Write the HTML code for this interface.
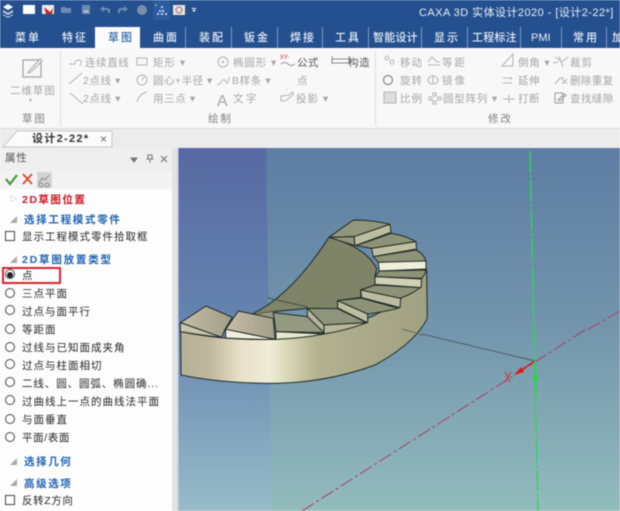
<!DOCTYPE html>
<html lang="zh"><head><meta charset="utf-8"><title>CAXA 3D</title>
<style>
html,body{margin:0;padding:0;background:#fff}
#r{position:relative;width:620px;height:511px;overflow:hidden;font-family:"Liberation Sans","Noto Sans CJK SC",sans-serif;filter:blur(.45px)}
#r div,#r span{position:absolute;white-space:nowrap}
.tab{top:31px;height:17px;line-height:15px;font-size:11px;letter-spacing:2px;color:#e6edf6;font-weight:500}
.sep{top:27px;width:1px;height:21px;background:#7d98c0}
.g{font-size:10.5px;letter-spacing:1.6px;color:#a6a6a6;line-height:14px;height:14px;margin-top:1px}
.gl{font-size:10.5px;letter-spacing:2px;color:#808080;line-height:14px;height:14px;margin-top:1px}
.p{left:22px;font-size:10.5px;letter-spacing:1px;color:#262626;line-height:14px;height:14px}
.h{font-size:10.5px;letter-spacing:1.7px;font-weight:700;color:#1f63b4;line-height:14px;height:14px}
.ra{left:5px;width:8px;height:8px;border:1px solid #444;border-radius:50%;background:#fff}
.cb{left:5px;width:8px;height:8px;border:1px solid #444;background:#fff}
.tri{font-size:7px;color:#aaa;left:10px;line-height:10px}
</style></head><body><div id="r">

<div style="left:0;top:0;width:620px;height:48px;background:#24508f"></div>
<svg style="position:absolute;left:0;top:0" width="200" height="26" viewBox="0 0 200 26">
 <path d="M3 7l5-3 5 3-5 3z" fill="#fff"/><path d="M3 10l5 3 5-3v2l-5 3-5-3z" fill="#cfd8f0"/><path d="M3 14l5 3 5-3v1l-5 3-5-3z" fill="#d7def2"/>
 <rect x="23" y="5" width="12" height="9" fill="#fff"/>
 <rect x="42" y="5" width="12" height="9" fill="#f2ede8"/><path d="M44 7l6 5 3-4-1 6h-6z" fill="#c8242b"/>
 <path d="M61 7h4l1 1h5v5H61z" fill="#6e8db5"/>
 <rect x="82" y="5" width="8" height="9" fill="#6f8ab0"/><rect x="83.500" y="10" width="5" height="3" fill="#a6b6cc"/>
 <path d="M100 9l4-3v2h3q3 0 3 3v2h-2v-2q0-1-2-1h-2v2z" fill="#6f8db6"/>
 <path d="M128 9l-4-3v2h-3q-3 0-3 3v2h2v-2q0-1 2-1h2v2z" fill="#6f8db6"/>
 <circle cx="142" cy="10" r="5" fill="#7c8ea9"/>
 <rect x="153" y="0" width="17" height="20" fill="#2b5c9f"/>
 <path d="M156 4l1 1-1 1-1-1z" fill="#e8d760"/>
 <g fill="#bcd3ee"><rect x="161" y="6" width="2" height="2"/><rect x="159" y="10" width="2" height="2"/><rect x="162" y="10" width="2" height="2"/><rect x="157" y="13" width="2" height="2"/><rect x="161" y="13" width="2" height="2"/><rect x="165" y="13" width="2" height="2"/></g>
 <rect x="173" y="5" width="12" height="10" fill="#e6e4de"/><circle cx="179" cy="10" r="3" fill="none" stroke="#a67" stroke-width="1"/>
 <path d="M192 8h4v1h-4zM192 10h4l-2 2z" fill="#fff"/>
</svg>
<div style="left:419px;top:6px;font-size:11px;letter-spacing:.45px;color:#e9eff7;line-height:15px">CAXA 3D 实体设计2020 - [设计2-22*]</div>

<div class="tab" style="left:15px">菜单</div>
<div class="tab" style="left:62px">特征</div>
<div style="left:95px;top:27px;width:45px;height:22px;background:#fbfbfb"></div>
<div class="tab" style="left:108px;color:#2d66ac">草图</div>
<div class="tab" style="left:153px">曲面</div>
<div class="tab" style="left:199px">装配</div>
<div class="tab" style="left:244px">钣金</div>
<div class="tab" style="left:290px">焊接</div>
<div class="tab" style="left:335px">工具</div>
<div class="tab" style="left:373px;letter-spacing:.2px">智能设计</div>
<div class="tab" style="left:434px">显示</div>
<div class="tab" style="left:472px;letter-spacing:.2px">工程标注</div>
<div class="tab" style="left:531px;letter-spacing:0;font-size:11px">PMI</div>
<div class="tab" style="left:573px">常用</div>
<div class="tab" style="left:612px">加</div>
<div class="sep" style="left:185px"></div><div class="sep" style="left:231px"></div><div class="sep" style="left:277px"></div><div class="sep" style="left:322px"></div><div class="sep" style="left:368px"></div><div class="sep" style="left:421px"></div><div class="sep" style="left:467px"></div><div class="sep" style="left:520px"></div><div class="sep" style="left:561px"></div><div class="sep" style="left:606px"></div>

<div style="left:0;top:49px;width:620px;height:79px;background:#f8f8f8;border-bottom:1px solid #d9d9d9"></div>
<div style="left:60px;top:51px;width:1px;height:75px;background:#dedede"></div>
<div style="left:375px;top:51px;width:1px;height:75px;background:#dedede"></div>

<svg style="position:absolute;left:0;top:49px" width="620" height="62" viewBox="0 49 620 62" fill="none" stroke="#b4b4b4" stroke-width="1">
 <rect x="23" y="60" width="18" height="17" stroke="#a5a5a5" stroke-width="1.300"/><path d="M29 71l11-12 2 2-11 11-3 1z" fill="#f8f8f8" stroke="#a5a5a5"/>
 <path d="M69 64h6M75 64q0-4 4-4t1 6"/>
 <path d="M69 84l13-11M70 93l13 11" />
 <rect x="137" y="58" width="10" height="7"/>
 <circle cx="142" cy="80" r="5"/><path d="M142 80l2-3"/>
 <path d="M137 102q2-8 10-10"/>
 <circle cx="223" cy="62" r="5"/><circle cx="223" cy="62" r=".7"/>
 <path d="M217 85q3-1 5-4t4 1 3-5"/>
 <path d="M281 64q4-3 7 0t7 0" stroke="#9a8fb0"/>
 <path d="M281 96l8-1 4-3v3l-8 6h-4z"/>
 <path d="M332 56v8M349 56v8M332 59h17M332 63h17" stroke="#888"/>
 <circle cx="387" cy="58" r="2"/><circle cx="392" cy="62" r="2"/>
 <circle cx="388" cy="80" r="4.500" stroke="#8a8a8a" stroke-width="1.300"/>
 <rect x="384" y="92" width="12" height="11" fill="#dedede"/>
 <path d="M428 62l4-5 5 5h3M428 65h12"/>
 <ellipse cx="433" cy="80" rx="5" ry="4"/><path d="M433 75v9"/>
 <path d="M433 93h3v3h-3zM429 97h3v3h-3zM438 97h3v3h-3zM433 101h3v3h-3z"/>
 <path d="M502 66l11-12v12z"/>
 <path d="M503 78h9M503 83h9M511 77v3M503 99h12M509 95v8"/>
 <path d="M555 57l7 5 6-5M559 56l4 11M553 63l5-1"/>
 <path d="M555 84l5-6h4M562 79l5 5M567 79l-5 5"/>
 <rect x="555" y="93" width="8" height="10" stroke="#999"/><path d="M558 100l6-6 2 1-6 6z" stroke="#999"/>
</svg>
<div style="left:217px;top:93px;font-size:16px;color:#a8a8a8;line-height:18px">A</div>
<div style="left:280px;top:55px;font-size:6px;color:#c0392b;line-height:7px">XY·</div>
<div style="left:285px;top:85px;font-size:10px;color:#aaa;line-height:10px">·</div>

<div class="g" style="left:10px;top:83px;letter-spacing:.9px">二维草图</div>
<div class="g" style="left:29px;top:95px;font-size:6px;line-height:10px">▾</div>
<div class="gl" style="left:22px;top:111px;letter-spacing:-.5px;font-size:10.5px;word-spacing:0">草 图</div>

<div class="g" style="left:85px;top:55px;letter-spacing:.6px">连续直线</div>
<div class="g" style="left:83px;top:73px;letter-spacing:.6px">2点线 ▾</div>
<div class="g" style="left:83px;top:91px;letter-spacing:.6px">2点线 ▾</div>
<div class="g" style="left:153px;top:55px;letter-spacing:1px">矩形 ▾</div>
<div class="g" style="left:153px;top:73px;letter-spacing:.5px">圆心+半径 ▾</div>
<div class="g" style="left:153px;top:91px;letter-spacing:.6px">用三点 ▾</div>
<div class="g" style="left:233px;top:55px;letter-spacing:.9px">椭圆形 ▾</div>
<div class="g" style="left:232px;top:73px;letter-spacing:.6px">B样条 ▾</div>
<div class="g" style="left:233px;top:91px;letter-spacing:2.500px">文字</div>
<div class="gl" style="left:208px;top:111px;letter-spacing:-.5px">绘 制</div>
<div class="g" style="left:297px;top:55px;letter-spacing:.4px;color:#555">公式</div>
<div class="g" style="left:297px;top:73px">点</div>
<div class="g" style="left:296px;top:91px;letter-spacing:1px">投影 ▾</div>
<div class="g" style="left:348px;top:55px;letter-spacing:.6px;color:#555">构造</div>
<div class="g" style="left:400px;top:55px;letter-spacing:1px">移动</div>
<div class="g" style="left:400px;top:73px;letter-spacing:1px">旋转</div>
<div class="g" style="left:400px;top:91px;letter-spacing:1px">比例</div>
<div class="g" style="left:442px;top:55px;letter-spacing:2px">等距</div>
<div class="g" style="left:442px;top:73px;letter-spacing:2px">镜像</div>
<div class="g" style="left:443px;top:91px;letter-spacing:.8px">圆型阵列 ▾</div>
<div class="g" style="left:518px;top:55px;letter-spacing:.8px">倒角 ▾</div>
<div class="g" style="left:518px;top:73px;letter-spacing:.5px">延伸</div>
<div class="g" style="left:518px;top:91px;letter-spacing:.5px">打断</div>
<div class="g" style="left:570px;top:55px;letter-spacing:1px">裁剪</div>
<div class="g" style="left:570px;top:73px;letter-spacing:.4px">删除重复</div>
<div class="g" style="left:570px;top:91px;letter-spacing:.4px">查找缝隙</div>
<div class="gl" style="left:488px;top:111px;letter-spacing:-.5px">修 改</div>

<div style="left:0;top:129px;width:620px;height:19px;background:#ececec"></div>
<svg style="position:absolute;left:0;top:129px" width="120" height="20"><path d="M3 18L17 2H112V18Z" fill="#fbfbfb" stroke="#c8c8c8"/></svg>
<div style="left:32px;top:132px;font-size:11px;font-weight:700;letter-spacing:1.300px;color:#333;line-height:14px">设计2-22*</div>
<div style="left:100px;top:132px;font-size:12px;color:#666;line-height:14px">×</div>

<div style="left:0;top:148px;width:177px;height:363px;background:#fdfdfd"></div>
<div style="left:0;top:148px;width:172px;height:24px;background:#efefef"></div>
<div style="left:0;top:172px;width:172px;height:17px;background:#f3f3f3"></div>
<div style="left:172px;top:148px;width:5px;height:363px;background:#e3e3e3"></div>
<div style="left:5px;top:151px;font-size:10.500px;letter-spacing:.8px;color:#555;line-height:14px">属性</div>
<svg style="position:absolute;left:125px;top:152px" width="46" height="14" fill="#777" stroke="#777"><path d="M6 6h6l-3 4z"/><path d="M23 3h4v4h-4zM25 7v4M21.500 7h7" fill="none"/><path d="M36 4l6 6M42 4l-6 6" fill="none" stroke-width="1.200"/></svg>
<svg style="position:absolute;left:3px;top:171px" width="52" height="18">
 <path d="M3 8l4 5 7-9" fill="none" stroke="#3f9a3a" stroke-width="2.200"/>
 <path d="M20 3l9 10M29 3l-9 10" fill="none" stroke="#d8503c" stroke-width="2"/>
 <rect x="34" y="1" width="15" height="16" fill="#d4d4d4"/>
 <path d="M36 12l3-5 3 2 4-5M38 12a2 2 0 1 0 .1 0M44 12a2 2 0 1 0 .1 0" fill="none" stroke="#8b8b8b"/>
</svg>

<div class="tri" style="top:195px">▷</div>
<div class="h" style="left:22px;top:193px;color:#cc1320;letter-spacing:1.500px">2D草图位置</div>
<div class="tri" style="top:216px">◢</div>
<div class="h" style="left:24px;top:213px;letter-spacing:1.700px">选择工程模式零件</div>
<div class="cb" style="top:231px"></div>
<div class="p" style="top:230px">显示工程模式零件拾取框</div>
<div class="tri" style="top:256px">◢</div>
<div class="h" style="left:22px;top:253px;letter-spacing:1.800px">2D草图放置类型</div>

<div style="left:2px;top:267px;width:55px;height:13px;border:2px solid #d8232a"></div>
<div class="ra" style="top:269px"></div><div style="left:7px;top:272px;width:6px;height:6px;border-radius:50%;background:#222"></div>
<div class="p" style="top:269px">点</div>
<div class="ra" style="top:288px"></div><div class="p" style="top:287px">三点平面</div>
<div class="ra" style="top:305px"></div><div class="p" style="top:305px">过点与面平行</div>
<div class="ra" style="top:324px"></div><div class="p" style="top:323px">等距面</div>
<div class="ra" style="top:342px"></div><div class="p" style="top:341px">过线与已知面成夹角</div>
<div class="ra" style="top:359px"></div><div class="p" style="top:359px">过点与柱面相切</div>
<div class="ra" style="top:377px"></div><div class="p" style="top:377px;letter-spacing:.9px">二线、圆、圆弧、椭圆确...</div>
<div class="ra" style="top:395px"></div><div class="p" style="top:395px;letter-spacing:1px">过曲线上一点的曲线法平面</div>
<div class="ra" style="top:414px"></div><div class="p" style="top:413px">与面垂直</div>
<div class="ra" style="top:432px"></div><div class="p" style="top:431px;letter-spacing:.6px">平面/表面</div>
<div class="tri" style="top:458px">◢</div>
<div class="h" style="left:24px;top:455px;letter-spacing:1.600px">选择几何</div>
<div class="tri" style="top:479px">◢</div>
<div class="h" style="left:24px;top:477px;letter-spacing:1.600px">高级选项</div>
<div class="cb" style="top:495px"></div>
<div class="p" style="top:494px;letter-spacing:.6px">反转Z方向</div>

<svg style="position:absolute;left:177px;top:148px" width="443" height="363" viewBox="177 148 443 363">
 <defs>
  <linearGradient id="bg" x1="0" y1="0" x2="0" y2="1"><stop offset="0" stop-color="#5d7da3"/><stop offset=".5" stop-color="#7396ad"/><stop offset="1" stop-color="#93bcbd"/></linearGradient>
  <linearGradient id="bl" x1="0" y1="0" x2="0" y2="1"><stop offset="0" stop-color="#5769a3"/><stop offset=".5" stop-color="#6686b0"/><stop offset="1" stop-color="#99bcc9"/></linearGradient>
  <linearGradient id="wall" x1="0" y1="0" x2="1" y2="0"><stop offset="0" stop-color="#b6b096"/><stop offset=".12" stop-color="#bfb89f"/><stop offset=".24" stop-color="#e6e0c8"/><stop offset=".36" stop-color="#f1ecd8"/><stop offset=".4" stop-color="#e2e3c4"/><stop offset=".55" stop-color="#b3b291"/><stop offset="1" stop-color="#a0a182"/></linearGradient>
  <linearGradient id="t1" x1="0" y1="0" x2="1" y2="0"><stop offset="0" stop-color="#c4bda8"/><stop offset="1" stop-color="#a29e88"/></linearGradient>
 </defs>
 <rect x="177" y="148" width="443" height="363" fill="url(#bg)"/>
 <path d="M177 148H266L272 511H177Z" fill="url(#bl)"/>
 <path d="M177 148h1.500v363H177z" fill="#cfd6e2"/>

 <path d="M585 330L302 511" stroke="#a8476f" stroke-width="1.100" stroke-dasharray="14 3 3 3" fill="none"/>
 <path d="M620 311L585 331" stroke="#a8476f" stroke-width="1.100" stroke-dasharray="14 3 3 3" fill="none"/>
 <path d="M530 151L538 511" stroke="#32d25c" stroke-width="1.400" stroke-dasharray="22 2 3 2" fill="none"/>
 <path d="M422 334L535 361" stroke="#4c5f66" stroke-width="1" fill="none"/>

 <g transform="translate(175 210) scale(.3333)" stroke="#1e2a26" stroke-width="3" stroke-linejoin="round">
  <path d="M17 365Q150 392 290 388Q450 380 600 315Q700 265 755 180L757 325Q720 400 600 465Q450 520 290 520Q140 520 18 495Z" fill="url(#wall)"/>
  <path d="M462 82Q570 110 605 175L600 200V225L557 240L558 262L488 272L488 296Q440 300 397 295L295 305L225 315Q345 262 462 82Z" fill="#7f8368"/>
  <path d="M225 315L295 305V330Z" fill="#9a9680" stroke="none"/>
  <path d="M535 30Q595 30 645 43L537 80L462 82Z" fill="#92967b"/>
  <path d="M537 80L645 43L648 67L540 107Z" fill="#bdbda0"/>
  <path d="M462 82L537 80L540 107Z" fill="#92967b"/>
  <path d="M543 107L650 70Q695 78 723 95L590 115Z" fill="#8e9277"/>
  <path d="M590 115L723 95L725 117L595 140Z" fill="#bfbfa2"/>
  <path d="M595 140L723 120Q748 132 753 155L610 157Z" fill="#8e9277"/>
  <path d="M610 157L753 153V177L613 183Z" fill="#f0f0da"/>
  <path d="M613 183L753 180Q752 192 740 205L600 200Z" fill="#8e9277"/>
  <path d="M600 200L740 207L738 233L600 223Z" fill="#cfd0b5"/>
  <path d="M600 225L735 233Q712 252 675 265L557 240Z" fill="#8e9378"/>
  <path d="M557 240L677 265L675 293L560 263Z" fill="#bcbda0"/>
  <path d="M558 264L670 295Q630 305 578 312L488 272Z" fill="#8e9378"/>
  <path d="M488 272L578 312V338L488 294Z" fill="#bdbda0"/>
  <path d="M397 295L488 296L575 338L447 345Z" fill="#8f957c"/>
  <path d="M447 345L575 338Q520 360 447 372Z" fill="#b7b799"/>
  <path d="M397 295L447 345V372L397 320Z" fill="#b4b59a"/>
  <path d="M295 308L397 320L447 368L303 365Z" fill="#949a82"/>
  <path d="M303 365L447 372Q380 385 303 388Z" fill="#e8e8cf"/>
  <path d="M190 303L295 325L300 388L152 358Z" fill="url(#t1)"/>
  <path d="M152 358L300 388Q220 388 152 384Z" fill="#f3efdc"/>
  <path d="M93 288L172 322L150 358L140 382L16 338Z" fill="url(#t1)"/>
  <path d="M16 338L140 382Q70 375 16 365Z" fill="#cac4ad"/>
 </g>
 <path d="M268 298L308 307" stroke="#3f4f4a" stroke-width="1" fill="none"/>
 <path d="M402 329L423 335" stroke="#6a6f5d" stroke-width="1" fill="none"/>

 <path d="M535 361L520 371" stroke="#e01a1a" stroke-width="1.600"/>
 <path d="M514 375l7-8 3 5z" fill="#e01a1a"/>
 <path d="M535 361L536 396" stroke="#2fd04f" stroke-width="1.600"/>
 <path d="M532 376h7l-3 8z" fill="#2fd04f"/>
 <path d="M505 372l5 10M511 372l-6 10" stroke="#d23040" stroke-width="1" fill="none"/>
</svg>
</div></body></html>
